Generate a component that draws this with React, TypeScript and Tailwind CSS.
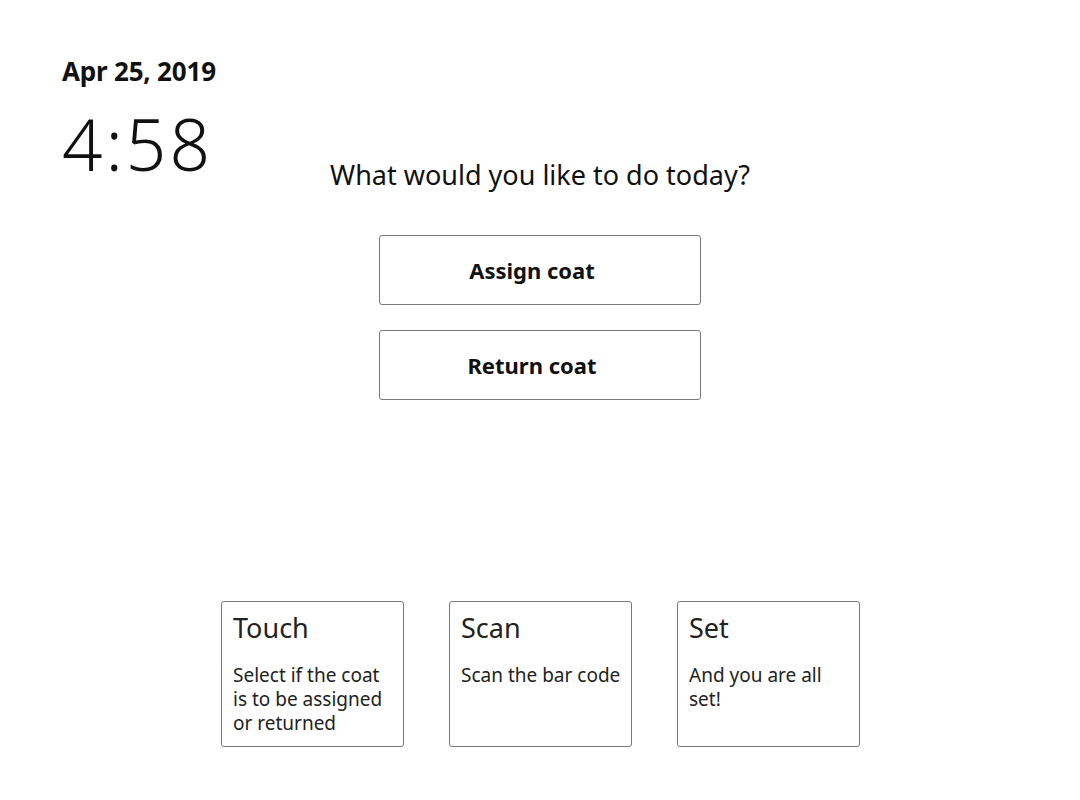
import React from "react";

const cards = [
  { title: "Touch", body: "Select if the coat is to be assigned or returned" },
  { title: "Scan", body: "Scan the bar code" },
  { title: "Set", body: "And you are all set!" },
];

export default function App() {
  return (
    <div
      className="w-[1080px] h-[800px] bg-white text-[#111] flex flex-col"
      style={{ fontFamily: '"Noto Sans", "Open Sans", sans-serif' }}
    >
      <div className="grid grid-cols-[1fr_auto_1fr]">
        <div className="pl-[62px] pt-[53px]">
          <div className="text-[26px] font-bold leading-[36px] tracking-[-0.2px]">Apr 25, 2019</div>
          <div className="text-[71px] font-light leading-[80px] mt-[15px] tracking-[3px]">4:58</div>
        </div>
        <div className="flex flex-col items-center pt-[156px]">
          <div className="text-[27px] leading-[38px]">What would you like to do today?</div>
          <div className="flex flex-col gap-[25px] mt-[41px]">
            <button className="w-[322px] h-[70px] border border-[#7a7a7a] rounded-[3px] bg-white text-[22px] font-bold pr-4">
              Assign coat
            </button>
            <button className="w-[322px] h-[70px] border border-[#7a7a7a] rounded-[3px] bg-white text-[22px] font-bold pr-4">
              Return coat
            </button>
          </div>
        </div>
        <div />
      </div>
      <div className="flex justify-center gap-[45px] mt-[201px] pl-[1px]">
        {cards.map((c) => (
          <div
            key={c.title}
            className="w-[183px] h-[146px] border border-[#7a7a7a] rounded-[3px] pl-[11px] pr-[9px] pt-[8px]"
          >
            <div className="text-[27px] leading-[36px] text-[#222]">{c.title}</div>
            <div className="text-[19px] leading-[24px] mt-[17px] text-[#222]">{c.body}</div>
          </div>
        ))}
      </div>
    </div>
  );
}
